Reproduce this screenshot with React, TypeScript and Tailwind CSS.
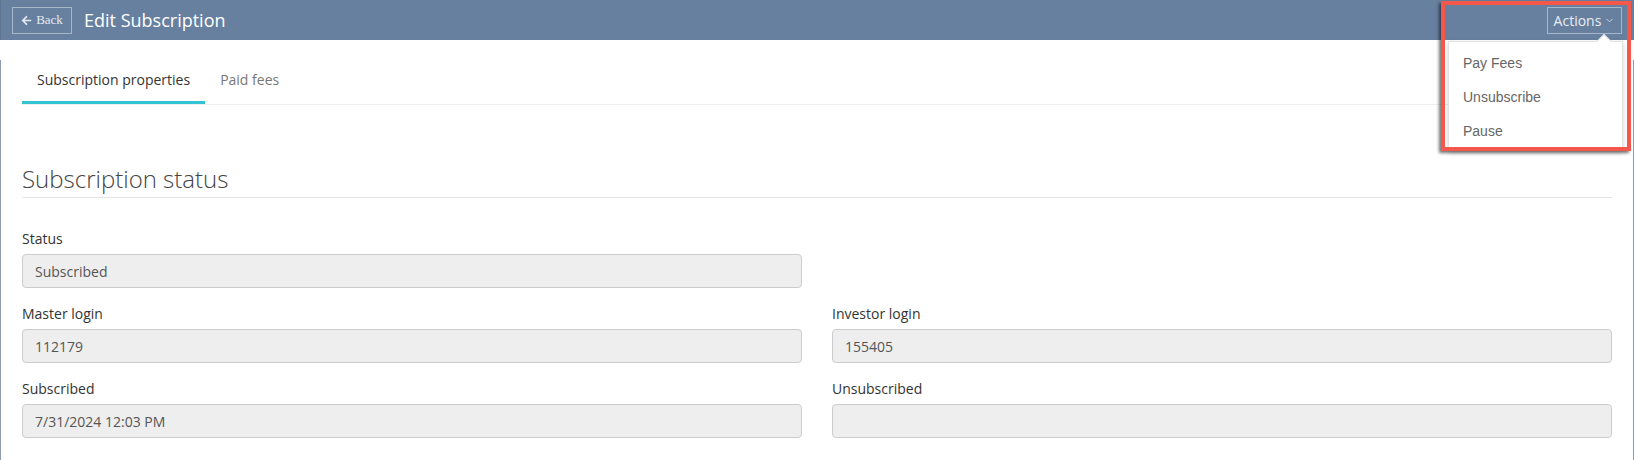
import { ChevronDown } from "lucide-react";
import { FaArrowLeft } from "react-icons/fa";

type Field = {
  label: string;
  value: string;
};

const rows: (Field | null)[][] = [
  [{ label: "Status", value: "Subscribed" }, null],
  [
    { label: "Master login", value: "112179" },
    { label: "Investor login", value: "155405" },
  ],
  [
    { label: "Subscribed", value: "7/31/2024 12:03 PM" },
    { label: "Unsubscribed", value: "" },
  ],
];

const actions = ["Pay Fees", "Unsubscribe", "Pause"];

function ReadonlyField({ field }: { field: Field }) {
  return (
    <div className="flex flex-col">
      <label className="text-[14px] leading-[20px] text-[#333] mb-[5px]">
        {field.label}
      </label>
      <div className="h-[34px] px-[12px] flex items-center bg-[#eeeeee] border border-[#cccccc] rounded-[4px] text-[14px] text-[#555]">
        {field.value}
      </div>
    </div>
  );
}

function ActionsMenu() {
  return (
    <>
      <div className="absolute top-[41px] right-[11px] w-[175px] bg-white border border-[#e3e3e3] shadow-[0_2px_6px_rgba(0,0,0,0.18)] pt-[4px] pb-[1px] font-['Liberation_Sans',Arial,sans-serif]">
        <div className="absolute -top-[6px] right-[13px] w-[10px] h-[10px] bg-white border-l border-t border-[#e3e3e3] rotate-45" />
        {actions.map((a) => (
          <div
            key={a}
            className="h-[34px] pl-[14px] flex items-center text-[14px] text-[#666]"
          >
            {a}
          </div>
        ))}
      </div>
      {/* highlight frame around the open menu */}
      <div className="absolute top-[1px] right-[3px] w-[190px] h-[150px] border-[4px] border-[#f3584a] shadow-[-2px_2px_3px_rgba(0,0,0,0.55)] pointer-events-none" />
    </>
  );
}

export default function App() {
  return (
    <div className="relative w-[1634px] h-[460px] overflow-hidden bg-white font-['Open_Sans',sans-serif]">
      <div className="h-[40px] bg-[#67809f] border-l border-[#5d7493] flex items-center pl-[11px] pr-[12px]">
        <button className="h-[27px] w-[60px] border border-[#a7b6c9] flex items-center justify-center gap-[4px] text-[#e4e9ef] text-[13px] font-['Liberation_Serif',serif]">
          <FaArrowLeft size={11} />
          Back
        </button>
        <h1 className="ml-[12px] text-[18px] text-white">Edit Subscription</h1>
        <button className="ml-auto h-[27px] w-[75px] border border-[#a7b6c9] flex items-center justify-center gap-[3px] text-[#e8edf3] text-[14px]">
          Actions
          <ChevronDown size={11} strokeWidth={1.6} />
        </button>
      </div>

      <div className="h-[420px] border-x border-[#8d9bb2] px-[21px]">
        <div className="mt-[20px] flex border-b border-[#eeeeee]">
          <div className="px-[15px] pt-[10px] pb-[11px] text-[14px] leading-[20px] text-[#333] border-b-[3px] border-[#33c3d3]">
            Subscription properties
          </div>
          <div className="px-[15px] pt-[10px] pb-[11px] text-[14px] leading-[20px] text-[#777]">
            Paid fees
          </div>
        </div>

        <h2 className="mt-[61px] pb-[5px] border-b border-[#e5e5e5] text-[24px] leading-[1.1] font-light text-[#444]">
          Subscription status
        </h2>

        <div className="mt-[31px] grid grid-cols-2 gap-x-[30px] gap-y-[16px]">
          {rows.flatMap((row, i) =>
            row.map((f, j) =>
              f ? (
                <ReadonlyField key={`${i}-${j}`} field={f} />
              ) : (
                <div key={`${i}-${j}`} />
              )
            )
          )}
        </div>
      </div>

      <ActionsMenu />
    </div>
  );
}
